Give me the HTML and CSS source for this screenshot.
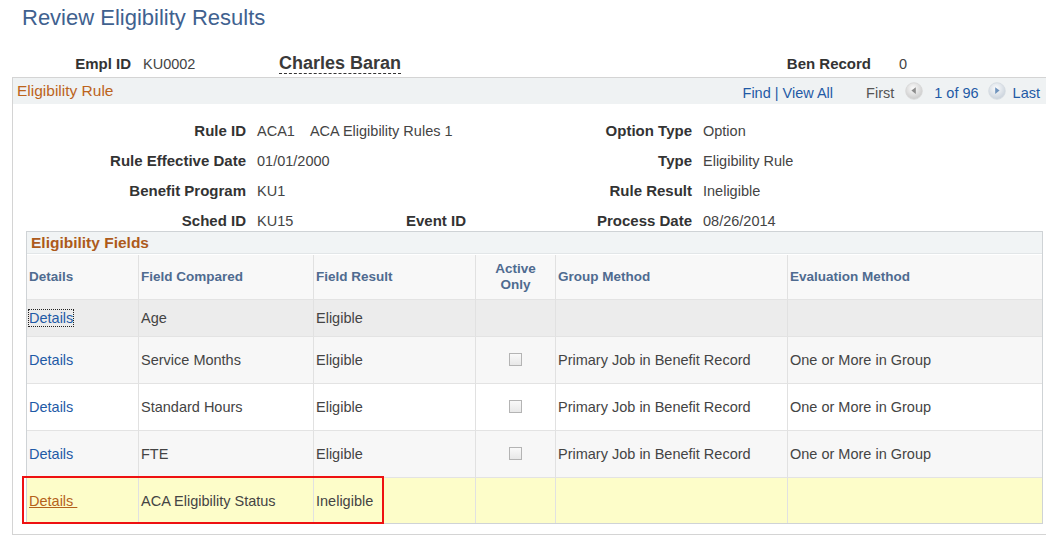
FILE: index.html
```html
<!DOCTYPE html>
<html lang="en">
<head>
    <meta charset="UTF-8">
    <meta name="viewport" content="width=device-width, initial-scale=1.0">
    <title>Review Eligibility Results</title>
    <link rel="stylesheet" href="styles.css">
</head>
<body>
    <h1 class="page-title">Review Eligibility Results</h1>

    <div class="emp-row">
        <span class="lbl emp-lbl">Empl ID</span>
        <span class="val emp-val">KU0002</span>
        <span class="emp-name">Charles Baran</span>
        <span class="lbl ben-lbl">Ben Record</span>
        <span class="val ben-val">0</span>
    </div>

    <div class="box">
        <div class="box-head">
            <span class="box-title">Eligibility Rule</span>
            <div class="nav">
                <a class="nav-link" href="#">Find</a>
                <span class="nav-sep">|</span>
                <a class="nav-link" href="#">View All</a>
                <span class="nav-first">First</span>
                <svg class="nav-btn" width="18" height="18" viewBox="0 0 18 18">
                    <defs>
                        <radialGradient id="gPrev" cx="45%" cy="35%" r="60%">
                            <stop offset="0" stop-color="#fbfbfb"/>
                            <stop offset="1" stop-color="#cfcfcf"/>
                        </radialGradient>
                    </defs>
                    <circle cx="9" cy="9" r="8.3" fill="url(#gPrev)" stroke="#d6d6d6" stroke-width="0.8"/>
                    <path d="M10.8 5.2 L6.4 8.6 L10.8 12 Z" fill="#8c8c8c"/>
                </svg>
                <span class="nav-count">1 of 96</span>
                <svg class="nav-btn nav-next" width="18" height="18" viewBox="0 0 18 18">
                    <defs>
                        <radialGradient id="gNext" cx="45%" cy="35%" r="60%">
                            <stop offset="0" stop-color="#fbfcfd"/>
                            <stop offset="1" stop-color="#cdd5de"/>
                        </radialGradient>
                    </defs>
                    <circle cx="9" cy="9" r="8.3" fill="url(#gNext)" stroke="#d3d9e0" stroke-width="0.8"/>
                    <path d="M7.2 5.2 L11.6 8.6 L7.2 12 Z" fill="#6f93bd"/>
                </svg>
                <a class="nav-link" href="#">Last</a>
            </div>
        </div>

        <div class="fields">
            <span class="lbl">Rule ID</span>
            <span class="val span2"><span class="rule-code">ACA1</span>ACA Eligibility Rules 1</span>
            <span class="lbl">Option Type</span>
            <span class="val">Option</span>

            <span class="lbl">Rule Effective Date</span>
            <span class="val span2">01/01/2000</span>
            <span class="lbl">Type</span>
            <span class="val">Eligibility Rule</span>

            <span class="lbl">Benefit Program</span>
            <span class="val span2">KU1</span>
            <span class="lbl">Rule Result</span>
            <span class="val">Ineligible</span>

            <span class="lbl">Sched ID</span>
            <span class="val">KU15</span>
            <span class="lbl">Event ID</span>
            <span class="lbl">Process Date</span>
            <span class="val">08/26/2014</span>
        </div>

        <div class="grid">
            <div class="grid-title">Eligibility Fields</div>
            <table class="grid-table">
                <colgroup>
                    <col class="c-details">
                    <col class="c-field">
                    <col class="c-result">
                    <col class="c-active">
                    <col class="c-group">
                    <col>
                </colgroup>
                <thead>
                    <tr>
                        <th>Details</th>
                        <th>Field Compared</th>
                        <th>Field Result</th>
                        <th class="center">Active<br>Only</th>
                        <th>Group Method</th>
                        <th>Evaluation Method</th>
                    </tr>
                </thead>
                <tbody>
                    <tr class="row-sel">
                        <td><a class="link focused" href="#">Details</a></td>
                        <td>Age</td>
                        <td>Eligible</td>
                        <td></td>
                        <td></td>
                        <td></td>
                    </tr>
                    <tr class="row-odd">
                        <td><a class="link" href="#">Details</a></td>
                        <td>Service Months</td>
                        <td>Eligible</td>
                        <td class="center"><span class="check"></span></td>
                        <td>Primary Job in Benefit Record</td>
                        <td>One or More in Group</td>
                    </tr>
                    <tr class="row-even">
                        <td><a class="link" href="#">Details</a></td>
                        <td>Standard Hours</td>
                        <td>Eligible</td>
                        <td class="center"><span class="check"></span></td>
                        <td>Primary Job in Benefit Record</td>
                        <td>One or More in Group</td>
                    </tr>
                    <tr class="row-odd">
                        <td><a class="link" href="#">Details</a></td>
                        <td>FTE</td>
                        <td>Eligible</td>
                        <td class="center"><span class="check"></span></td>
                        <td>Primary Job in Benefit Record</td>
                        <td>One or More in Group</td>
                    </tr>
                    <tr class="row-hl">
                        <td><a class="link visited" href="#">Details&nbsp;</a></td>
                        <td>ACA Eligibility Status</td>
                        <td>Ineligible</td>
                        <td></td>
                        <td></td>
                        <td></td>
                    </tr>
                </tbody>
            </table>
            <div class="red-mark"></div>
        </div>
    </div>
</body>
</html>
```

FILE: styles.css
```css
body {
    margin: 0;
    background: #fff;
    font-family: "Liberation Sans", Arial, sans-serif;
    font-size: 14.5px;
    color: #444;
}
a {
    text-decoration: none;
}

.page-title {
    margin: 5px 0 0 22px;
    font-size: 22px;
    line-height: 26px;
    font-weight: normal;
    color: #40618f;
}

.lbl {
    font-weight: bold;
    font-size: 15px;
    color: #333;
    text-align: right;
    white-space: nowrap;
}
.val {
    color: #444;
    white-space: nowrap;
}

/* employee header */
.emp-row {
    display: flex;
    align-items: baseline;
    height: 46px;
    padding-top: 23px;
    box-sizing: border-box;
    line-height: 20px;
}
.emp-lbl {
    width: 131px;
}
.emp-val {
    margin-left: 12px;
    width: 136px;
}
.emp-name {
    font-size: 18px;
    font-weight: bold;
    color: #3a3a3a;
    line-height: 19px;
    border-bottom: 1px dashed #333;
}
.ben-lbl {
    width: 385px;
    margin-left: auto;
}
.ben-val {
    margin-left: 28px;
    width: 147px;
}

/* rule box */
.box {
    margin-left: 12px;
    border: 1px solid #d4d4d4;
    border-right: none;
    padding-bottom: 10px;
}
.box-head {
    display: flex;
    align-items: center;
    height: 26px;
    padding-left: 4px;
    background: #eff2f3;
}
.box-title {
    font-size: 15.5px;
    color: #bc641c;
}
.nav {
    margin-left: auto;
    display: flex;
    align-items: center;
    padding-right: 6px;
    padding-top: 3px;
}
.nav-link {
    color: #1f5aa6;
}
.nav-sep {
    color: #1f5aa6;
    margin: 0 4px;
}
.nav-first {
    color: #555;
    margin-left: 33px;
    margin-right: 11px;
}
.nav-btn {
    display: block;
    margin-top: -4px;
}
.nav-next {
    margin-right: 7px;
}
.nav-count {
    color: #1f5aa6;
    margin: 0 9px 0 11px;
}

/* rule fields */
.fields {
    display: grid;
    grid-template-columns: 233px 110px 88px 215px auto;
    grid-auto-rows: 20px;
    column-gap: 11px;
    row-gap: 10px;
    align-items: center;
    padding-top: 17px;
    line-height: 20px;
}
.span2 {
    grid-column: span 2;
}
.rule-code {
    margin-right: 15px;
}

/* eligibility fields grid */
.grid {
    position: relative;
    margin: 0 3px 0 13px;
    border: 1px solid #cfd3d6;
}
.grid-title {
    height: 21px;
    line-height: 21px;
    padding-left: 4px;
    background: #f1f4f5;
    border-bottom: 1px solid #e2e6e8;
    margin-bottom: 1px;
    font-size: 15.5px;
    font-weight: bold;
    color: #ad5a1b;
}
.grid-table {
    width: 100%;
    border-collapse: separate;
    border-spacing: 0;
    table-layout: fixed;
}
.c-details { width: 112px; }
.c-field { width: 175px; }
.c-result { width: 162px; }
.c-active { width: 80px; }
.c-group { width: 232px; }

.grid-table th,
.grid-table td {
    padding: 0 0 0 2px;
    border-right: 1px solid #e1e1e1;
    text-align: left;
    white-space: nowrap;
}
.grid-table th:last-child,
.grid-table td:last-child {
    border-right: none;
}
.grid-table th {
    height: 44px;
    background: #f8f8f8;
    font-size: 13.5px;
    line-height: 16px;
    color: #4f6b90;
    vertical-align: middle;
}
.grid-table td {
    height: 46px;
    border-top: 1px solid #e3e3e3;
    color: #444;
    vertical-align: middle;
}
.grid-table .center {
    text-align: center;
    padding-left: 0;
}
.row-sel td {
    height: 36px;
    background: #ececec;
}
.row-odd td {
    background: #f7f7f7;
}
.row-even td {
    background: #fff;
}
.row-hl td {
    height: 45px;
    background: #fdfdc9;
}

.link {
    color: #1f5aa6;
}
.link.focused {
    outline: 1px dotted #222;
}
.link.visited {
    color: #b5621c;
    text-decoration: underline;
}

.check {
    display: inline-block;
    width: 11px;
    height: 11px;
    margin-top: -4px;
    vertical-align: middle;
    border: 1px solid #b4b4b4;
    background: linear-gradient(#f9f9f9, #e8e8e8);
}

.red-mark {
    position: absolute;
    left: -5px;
    bottom: -1px;
    width: 362px;
    height: 48px;
    box-sizing: border-box;
    border: 2px solid #ee1111;
}
```
